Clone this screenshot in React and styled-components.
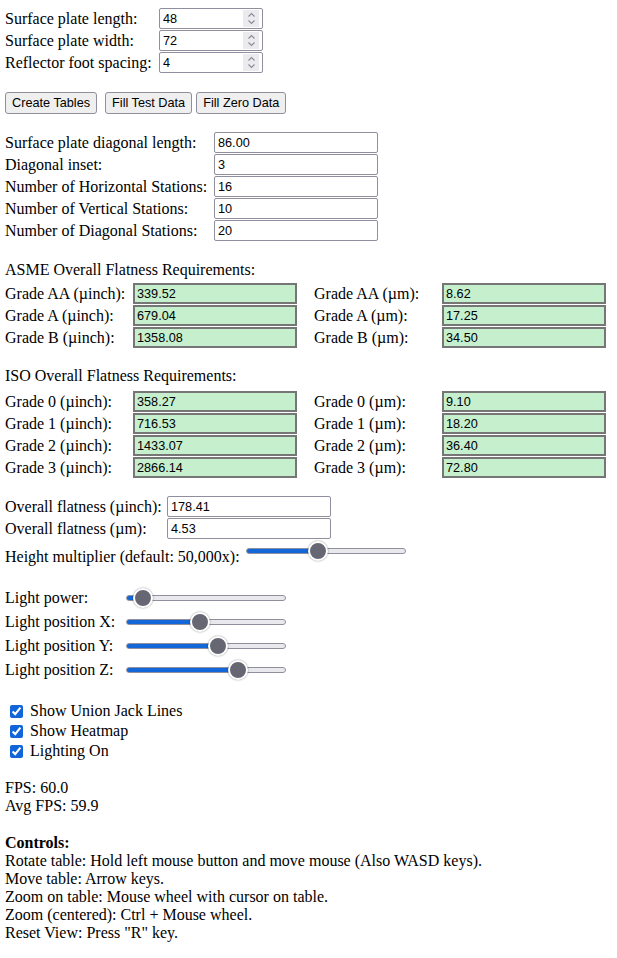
import React, { useState } from "react";
import styled, { createGlobalStyle } from "styled-components";

const Global = createGlobalStyle`
  html, body { margin: 0; padding: 0; background: #fff; }
  body {
    font-family: "Liberation Serif", "Times New Roman", serif;
    font-size: 16px;
    line-height: 18px;
    color: #000;
  }
`;

const Page = styled.div`
  padding: 8px 0 16px 5px;
  display: flex;
  flex-direction: column;
`;

const FieldGrid = styled.div`
  display: grid;
  grid-template-columns: ${(p) => p.$cols};
  grid-auto-rows: 21px;
  row-gap: 1px;
  align-items: center;
  margin-top: ${(p) => p.$top || 0}px;
`;

const Label = styled.span`
  white-space: nowrap;
  line-height: 18px;
`;

const TextInput = styled.input`
  box-sizing: border-box;
  width: ${(p) => p.$w}px;
  height: 21px;
  margin: 0;
  padding: 1px 2px 1px 3px;
  border: 1px solid #8f8f9d;
  border-radius: 2px;
  background: #fff;
  font-family: "Liberation Sans", Arial, sans-serif;
  font-size: 12.7px;
  color: #000;
  outline: none;
  -moz-appearance: textfield;
  &::-webkit-inner-spin-button,
  &::-webkit-outer-spin-button {
    -webkit-appearance: none;
    margin: 0;
  }
`;

const NumberWrap = styled.span`
  position: relative;
  display: inline-block;
  width: 104px;
  height: 21px;
`;

const Spinner = styled.span`
  position: absolute;
  top: 2px;
  right: 4px;
  width: 16px;
  height: 17px;
  background: #ebebef;
  display: flex;
  align-items: center;
  justify-content: center;
  pointer-events: none;
`;

function NumberField({ value }) {
  return (
    <NumberWrap>
      <TextInput type="number" $w={104} defaultValue={value} />
      <Spinner>
        <svg width="9" height="13" viewBox="0 0 9 13" fill="none" stroke="#8a8a96" strokeWidth="1.1">
          <path d="M1.5 4.5 L4.5 1.5 L7.5 4.5" />
          <path d="M1.5 8.5 L4.5 11.5 L7.5 8.5" />
        </svg>
      </Spinner>
    </NumberWrap>
  );
}

const ResultBox = styled.input`
  box-sizing: border-box;
  width: 164px;
  height: 21px;
  margin: 0;
  padding: 1px 2px;
  border: 2px solid #767676;
  background: #c6efce;
  font-family: "Liberation Sans", Arial, sans-serif;
  font-size: 12.7px;
  color: #000;
  outline: none;
`;

const ButtonBar = styled.div`
  display: flex;
  gap: 4px;
  margin-top: 19px;
`;

const Button = styled.button`
  box-sizing: border-box;
  height: 22px;
  margin: 0 ${(p) => (p.$wide ? 4 : 0)}px 0 0;
  padding: 1px 6px;
  border: 1px solid #8f8f9d;
  border-radius: 3px;
  background: #efefef;
  font-family: "Liberation Sans", Arial, sans-serif;
  font-size: 12.7px;
  color: #000;
`;

const Heading = styled.div`
  margin-top: ${(p) => p.$top}px;
  margin-bottom: ${(p) => p.$bottom}px;
  line-height: 18px;
`;

const ResultGrid = styled.div`
  display: grid;
  grid-template-columns: 128px 181px 128px 164px;
  grid-auto-rows: 21px;
  row-gap: 1px;
  align-items: center;
`;

const SliderRow = styled.div`
  display: flex;
  align-items: ${(p) => (p.$tall ? "flex-end" : "center")};
  height: ${(p) => (p.$tall ? 18 : 24)}px;
  margin-top: ${(p) => p.$top || 0}px;
`;

const SliderLabel = styled.span`
  white-space: nowrap;
  width: ${(p) => (p.$w ? p.$w + "px" : "auto")};
  margin-right: ${(p) => p.$gap || 0}px;
  line-height: 18px;
`;

const Range = styled.input.attrs({ type: "range" })`
  -webkit-appearance: none;
  appearance: none;
  width: 160px;
  height: 20px;
  margin: 0 0 ${(p) => p.$lift || 0}px 0;
  padding: 0;
  background: transparent;
  outline: none;

  &::-webkit-slider-runnable-track {
    height: 6px;
    box-sizing: border-box;
    border: 1px solid #8f8f9d;
    border-radius: 3px;
    background: linear-gradient(
      to right,
      #1467d8 0,
      #1467d8 ${(p) => p.$fill}px,
      #e9e9ed ${(p) => p.$fill}px,
      #e9e9ed 100%
    );
  }
  &::-webkit-slider-thumb {
    -webkit-appearance: none;
    appearance: none;
    box-sizing: border-box;
    width: 20px;
    height: 20px;
    margin-top: -8px;
    border-radius: 50%;
    background: #676774;
    border: 2px solid #fff;
    box-shadow: 0 0 2px rgba(0, 0, 0, 0.45);
  }
`;

function Slider({ initial, lift }) {
  const [v, setV] = useState(initial);
  const fill = 9 + (v / 100) * 140;
  return (
    <Range
      min={0}
      max={100}
      step={0.1}
      value={v}
      $fill={fill}
      $lift={lift}
      onChange={(e) => setV(Number(e.target.value))}
    />
  );
}

const CheckList = styled.div`
  display: flex;
  flex-direction: column;
  margin-top: 19px;
`;

const CheckRow = styled.label`
  display: flex;
  align-items: center;
  height: 20px;
  line-height: 18px;
`;

const Check = styled.input.attrs({ type: "checkbox" })`
  width: 13px;
  height: 13px;
  margin: 0 7px 0 5px;
  accent-color: #1165d8;
`;

const TextBlock = styled.div`
  margin-top: ${(p) => p.$top}px;
  line-height: 18px;
`;

const Strong = styled.b`
  font-weight: bold;
`;

const plate = [
  ["Surface plate length:", "48"],
  ["Surface plate width:", "72"],
  ["Reflector foot spacing:", "4"],
];

const geometry = [
  ["Surface plate diagonal length:", "86.00"],
  ["Diagonal inset:", "3"],
  ["Number of Horizontal Stations:", "16"],
  ["Number of Vertical Stations:", "10"],
  ["Number of Diagonal Stations:", "20"],
];

const asme = [
  ["AA", "339.52", "8.62"],
  ["A", "679.04", "17.25"],
  ["B", "1358.08", "34.50"],
];

const iso = [
  ["0", "358.27", "9.10"],
  ["1", "716.53", "18.20"],
  ["2", "1433.07", "36.40"],
  ["3", "2866.14", "72.80"],
];

const lights = [
  ["Light power:", 4.3],
  ["Light position X:", 45.7],
  ["Light position Y:", 58.6],
  ["Light position Z:", 73],
];

function Results({ rows }) {
  return (
    <ResultGrid>
      {rows.map(([g, inch, um]) => (
        <React.Fragment key={g}>
          <Label>Grade {g} (µinch):</Label>
          <ResultBox readOnly defaultValue={inch} />
          <Label>Grade {g} (µm):</Label>
          <ResultBox readOnly defaultValue={um} />
        </React.Fragment>
      ))}
    </ResultGrid>
  );
}

export default function App() {
  return (
    <>
      <Global />
      <Page>
        <FieldGrid $cols="154px 104px">
          {plate.map(([l, v]) => (
            <React.Fragment key={l}>
              <Label>{l}</Label>
              <NumberField value={v} />
            </React.Fragment>
          ))}
        </FieldGrid>

        <ButtonBar>
          <Button $wide>Create Tables</Button>
          <Button>Fill Test Data</Button>
          <Button>Fill Zero Data</Button>
        </ButtonBar>

        <FieldGrid $cols="209px 164px" $top={18}>
          {geometry.map(([l, v]) => (
            <React.Fragment key={l}>
              <Label>{l}</Label>
              <TextInput type="text" $w={164} defaultValue={v} />
            </React.Fragment>
          ))}
        </FieldGrid>

        <Heading $top={20} $bottom={4}>ASME Overall Flatness Requirements:</Heading>
        <Results rows={asme} />

        <Heading $top={19} $bottom={6}>ISO Overall Flatness Requirements:</Heading>
        <Results rows={iso} />

        <FieldGrid $cols="162px 164px" $top={18}>
          <Label>Overall flatness (µinch):</Label>
          <TextInput type="text" $w={164} defaultValue="178.41" />
          <Label>Overall flatness (µm):</Label>
          <TextInput type="text" $w={164} defaultValue="4.53" />
        </FieldGrid>

        <SliderRow $tall $top={9}>
          <SliderLabel $gap={6}>Height multiplier (default: 50,000x):</SliderLabel>
          <Slider initial={44.3} lift={5} />
        </SliderRow>

        <SliderRow $top={20}>
          <SliderLabel $w={121}>{lights[0][0]}</SliderLabel>
          <Slider initial={lights[0][1]} />
        </SliderRow>
        {lights.slice(1).map(([l, v]) => (
          <SliderRow key={l}>
            <SliderLabel $w={121}>{l}</SliderLabel>
            <Slider initial={v} />
          </SliderRow>
        ))}

        <CheckList>
          <CheckRow>
            <Check defaultChecked />
            Show Union Jack Lines
          </CheckRow>
          <CheckRow>
            <Check defaultChecked />
            Show Heatmap
          </CheckRow>
          <CheckRow>
            <Check defaultChecked />
            Lighting On
          </CheckRow>
        </CheckList>

        <TextBlock $top={18}>
          FPS: 60.0
          <br />
          Avg FPS: 59.9
        </TextBlock>

        <TextBlock $top={19}>
          <Strong>Controls:</Strong>
          <br />
          Rotate table: Hold left mouse button and move mouse (Also WASD keys).
          <br />
          Move table: Arrow keys.
          <br />
          Zoom on table: Mouse wheel with cursor on table.
          <br />
          Zoom (centered): Ctrl + Mouse wheel.
          <br />
          Reset View: Press "R" key.
        </TextBlock>
      </Page>
    </>
  );
}
